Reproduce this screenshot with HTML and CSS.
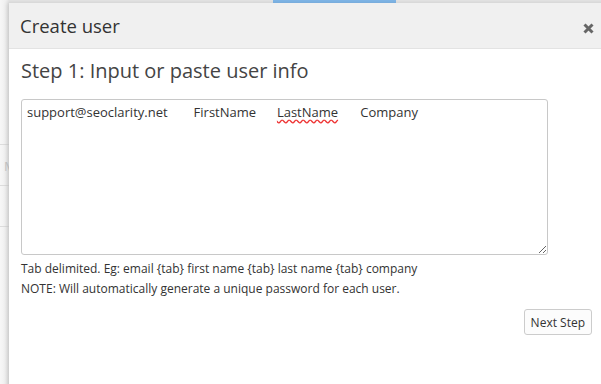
FILE: index.html
```html
<!DOCTYPE html>
<html>
<head>
<meta charset="utf-8">
<link rel="stylesheet" href="styles.css">
</head>
<body>
<div class="page">
  <div class="bg-tab"></div>
  <div class="bg-rows">
    <div class="bg-row"></div>
    <div class="bg-row bg-letter">M</div>
    <div class="bg-row"></div>
  </div>
  <div class="modal">
    <div class="modal-header">
      <h1 class="modal-title">Create user</h1>
      <svg class="close" width="11" height="11" viewBox="0 0 11 11"><path d="M1.5 1.5 L9.5 9.5 M9.5 1.5 L1.5 9.5" stroke="#666" stroke-width="3" stroke-linecap="butt"/></svg>
    </div>
    <div class="modal-body">
      <h2 class="step">Step 1: Input or paste user info</h2>
      <div class="textbox">support@seoclarity.net	FirstName	<span class="misspelled">LastName</span>	Company</div>
      <p class="help">Tab delimited. Eg: email {tab} first name {tab} last name {tab} company<br>NOTE: Will automatically generate a unique password for each user.</p>
      <div class="actions"><button class="btn">Next Step</button></div>
    </div>
  </div>
</div>
</body>
</html>
```
FILE: styles.css
```css
html, body {
  margin: 0;
  padding: 0;
  width: 601px;
  height: 384px;
  overflow: hidden;
  font-family: "Open Sans", "Liberation Sans", sans-serif;
}
.page {
  position: relative;
  width: 601px;
  height: 384px;
  background: linear-gradient(to right, #f7f7f7 0, #efefef 6px, #e4e4e4 9px);
  overflow: hidden;
}
.bg-tab {
  position: absolute;
  left: 273px;
  top: 0;
  width: 123px;
  height: 3px;
  background: #7fb6e8;
}
.bg-rows {
  position: absolute;
  left: 0;
  top: 104px;
  width: 9px;
}
.bg-row {
  height: 40px;
  border-bottom: 1px solid #dcdcdc;
}
.bg-letter {
  color: #c8c8c8;
  font-size: 13px;
  line-height: 14px;
  padding-top: 14px;
  height: 26px;
  padding-left: 4px;
}
.modal {
  position: absolute;
  left: 9px;
  top: 3px;
  width: 600px;
  height: 390px;
  background: #fff;
  box-shadow: -2px 0 4px rgba(0,0,0,0.12);
}
.modal-header {
  height: 45px;
  background: #f0f0f0;
  border-bottom: 1px solid #e3e3e3;
  display: flex;
  align-items: center;
  justify-content: space-between;
  padding: 0 15px 0 11px;
}
.modal-title {
  margin: 0;
  font-size: 18.5px;
  font-weight: 500;
  color: #333;
  line-height: 24px;
  padding-top: 1px;
}
.close {
  display: block;
  margin-top: 5px;
}
.modal-body {
  padding: 8px 0 0 12px;
}
.step {
  margin: 0;
  font-size: 20px;
  font-weight: 400;
  color: #444;
  line-height: 28px;
}
.textbox {
  margin-top: 14px;
  box-sizing: border-box;
  width: 527px;
  height: 156px;
  border: 1px solid #c8c8c8;
  border-radius: 3px;
  padding: 3px 5px;
  font-size: 13px;
  line-height: 18px;
  color: #333;
  white-space: pre;
  tab-size: 83.3px;
  -moz-tab-size: 83.3px;
  overflow: auto;
  resize: vertical;
}
.misspelled {
  text-decoration: underline wavy #e33;
  text-decoration-skip-ink: none;
  text-underline-offset: 2px;
}
.help {
  margin: 4px 0 0 0;
  font-size: 12px;
  line-height: 20px;
  color: #333;
}
.actions {
  display: flex;
  justify-content: flex-end;
  width: 571px;
  margin-top: 10px;
}
.btn {
  font-family: "Open Sans", "Liberation Sans", sans-serif;
  font-size: 12px;
  color: #333;
  background: #fcfcfc;
  border: 1px solid #ccc;
  border-radius: 3px;
  height: 26px;
  padding: 0 6px;
}
```
